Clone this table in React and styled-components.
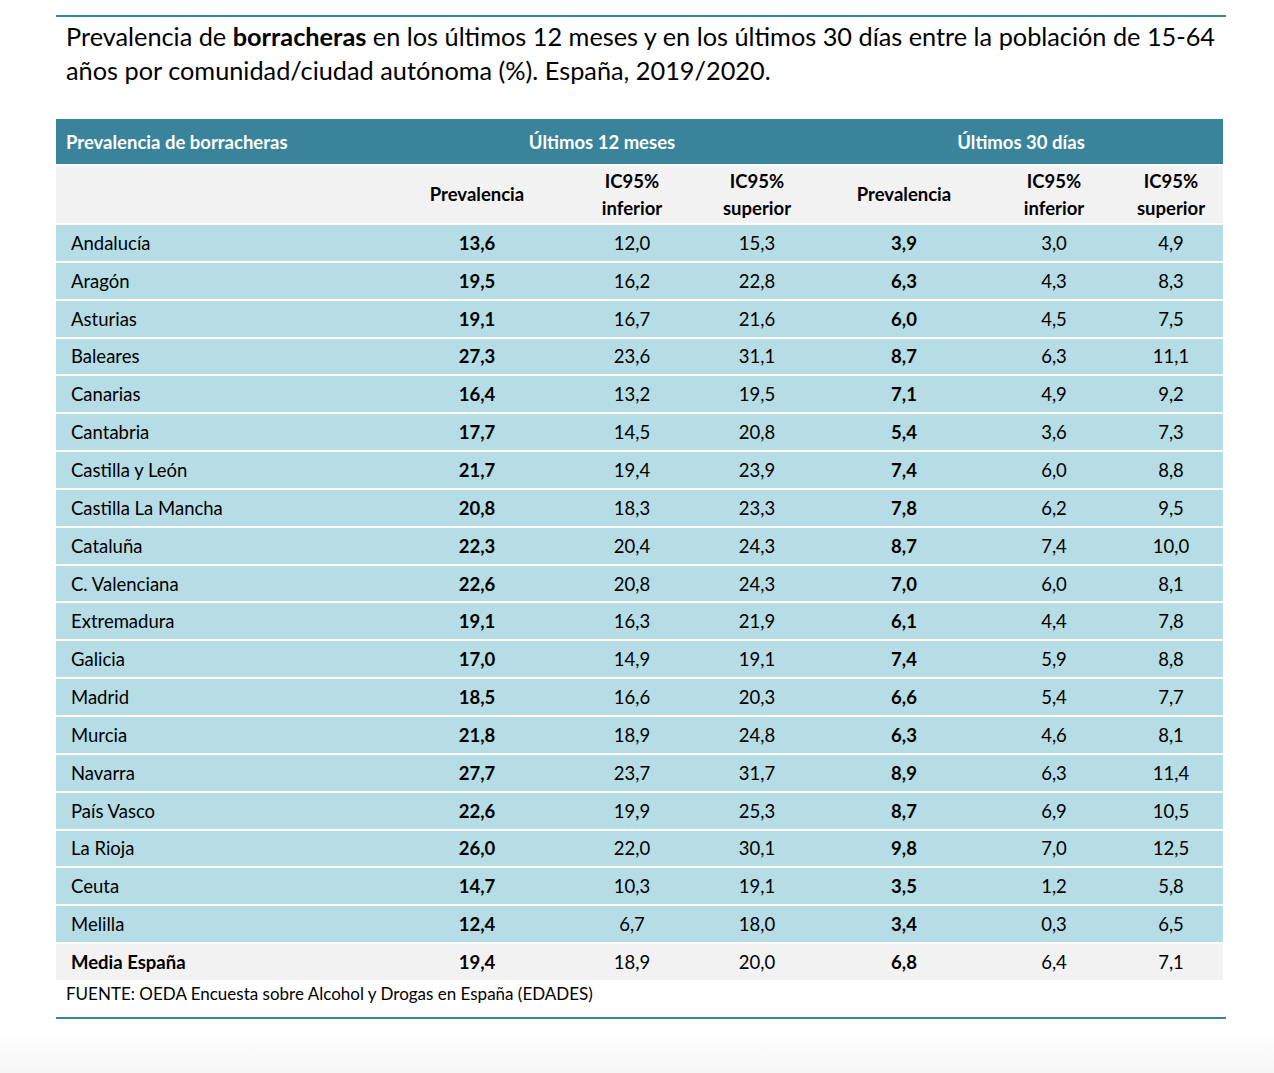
import styled, { createGlobalStyle } from "styled-components";

const GlobalStyle = createGlobalStyle`
  body {
    margin: 0;
    background: #fff;
    font-family: Lato, "Open Sans", "Liberation Sans", sans-serif;
    color: #000;
  }
`;

const TEAL = "#39849a";

const Page = styled.div`
  width: 1274px;
  height: 1073px;
  padding-top: 15px;
  box-sizing: border-box;
  background: linear-gradient(180deg, #fff 0, #fff 1030px, #f6f6f6 1073px);
`;

const Sheet = styled.div`
  margin-left: 56px;
  width: 1170px;
`;

const Rule = styled.div`
  height: 2px;
  background: ${TEAL};
`;

const Title = styled.h1`
  margin: 0;
  padding: 2px 0 0 10px;
  font-size: 25.3px;
  font-weight: 400;
  line-height: 34px;
  height: 100px;
  box-sizing: border-box;
  white-space: nowrap;
  b {
    font-weight: 700;
  }
`;

const Table = styled.table`
  width: 1167px;
  border-collapse: separate;
  border-spacing: 0 2px;
  margin-top: 0;
  table-layout: fixed;
`;

const Band = styled.tr`
  background: ${TEAL};
  color: #fff;
  th {
    height: 45px;
    font-size: 18.5px;
    font-weight: 700;
    padding: 0;
  }
`;

const BandTitle = styled.th`
  text-align: left;
  padding-left: 10px !important;
  vertical-align: middle;
`;

const SubHead = styled.tr`
  background: #f2f2f2;
  th {
    height: 57px;
    padding: 0;
    font-size: 18.5px;
    font-weight: 700;
    line-height: 27px;
    text-align: center;
  }
`;

const Row = styled.tr`
  background: ${(p) => (p.$total ? "#f2f2f2" : "#b6dde5")};
  td {
    height: 35.85px;
    padding: 0;
    font-size: 18.5px;
    text-align: center;
  }
`;

const Name = styled.td`
  text-align: left !important;
  padding-left: 15px !important;
  font-weight: ${(p) => (p.$bold ? 700 : 400)};
`;

const Num = styled.td`
  font-weight: ${(p) => (p.$bold ? 700 : 400)};
`;

const Source = styled.div`
  padding: 0 0 0 10px;
  font-size: 17px;
  height: 26px;
  line-height: 24px;
`;

const BottomRule = styled(Rule)`
  margin-top: 9px;
`;

const widths = [329, 184, 126, 124, 170, 130, 104];

const rows = [
  ["Andalucía", "13,6", "12,0", "15,3", "3,9", "3,0", "4,9"],
  ["Aragón", "19,5", "16,2", "22,8", "6,3", "4,3", "8,3"],
  ["Asturias", "19,1", "16,7", "21,6", "6,0", "4,5", "7,5"],
  ["Baleares", "27,3", "23,6", "31,1", "8,7", "6,3", "11,1"],
  ["Canarias", "16,4", "13,2", "19,5", "7,1", "4,9", "9,2"],
  ["Cantabria", "17,7", "14,5", "20,8", "5,4", "3,6", "7,3"],
  ["Castilla y León", "21,7", "19,4", "23,9", "7,4", "6,0", "8,8"],
  ["Castilla La Mancha", "20,8", "18,3", "23,3", "7,8", "6,2", "9,5"],
  ["Cataluña", "22,3", "20,4", "24,3", "8,7", "7,4", "10,0"],
  ["C. Valenciana", "22,6", "20,8", "24,3", "7,0", "6,0", "8,1"],
  ["Extremadura", "19,1", "16,3", "21,9", "6,1", "4,4", "7,8"],
  ["Galicia", "17,0", "14,9", "19,1", "7,4", "5,9", "8,8"],
  ["Madrid", "18,5", "16,6", "20,3", "6,6", "5,4", "7,7"],
  ["Murcia", "21,8", "18,9", "24,8", "6,3", "4,6", "8,1"],
  ["Navarra", "27,7", "23,7", "31,7", "8,9", "6,3", "11,4"],
  ["País Vasco", "22,6", "19,9", "25,3", "8,7", "6,9", "10,5"],
  ["La Rioja", "26,0", "22,0", "30,1", "9,8", "7,0", "12,5"],
  ["Ceuta", "14,7", "10,3", "19,1", "3,5", "1,2", "5,8"],
  ["Melilla", "12,4", "6,7", "18,0", "3,4", "0,3", "6,5"],
];

const total = ["Media España", "19,4", "18,9", "20,0", "6,8", "6,4", "7,1"];

function DataRow({ cells, $total }) {
  const [name, ...vals] = cells;
  return (
    <Row $total={$total}>
      <Name $bold={$total}>{name}</Name>
      {vals.map((v, i) => (
        <Num key={i} $bold={i === 0 || i === 3}>
          {v}
        </Num>
      ))}
    </Row>
  );
}

export default function App() {
  return (
    <Page>
      <GlobalStyle />
      <Sheet>
        <Rule />
        <Title>
          Prevalencia de <b>borracheras</b> en los últimos 12 meses y en los
          últimos 30 días entre la población de 15-64
          <br />
          años por comunidad/ciudad autónoma (%). España, 2019/2020.
        </Title>
        <Table>
          <colgroup>
            {widths.map((w, i) => (
              <col key={i} style={{ width: w }} />
            ))}
          </colgroup>
          <thead>
            <Band>
              <BandTitle>Prevalencia de borracheras</BandTitle>
              <th colSpan={3}>Últimos 12 meses</th>
              <th colSpan={3}>Últimos 30 días</th>
            </Band>
            <SubHead>
              <th />
              <th>Prevalencia</th>
              <th>
                IC95%
                <br />
                inferior
              </th>
              <th>
                IC95%
                <br />
                superior
              </th>
              <th>Prevalencia</th>
              <th>
                IC95%
                <br />
                inferior
              </th>
              <th>
                IC95%
                <br />
                superior
              </th>
            </SubHead>
          </thead>
          <tbody>
            {rows.map((r) => (
              <DataRow key={r[0]} cells={r} />
            ))}
            <DataRow cells={total} $total />
          </tbody>
        </Table>
        <Source>
          FUENTE: OEDA Encuesta sobre Alcohol y Drogas en España (EDADES)
        </Source>
        <BottomRule />
      </Sheet>
    </Page>
  );
}
